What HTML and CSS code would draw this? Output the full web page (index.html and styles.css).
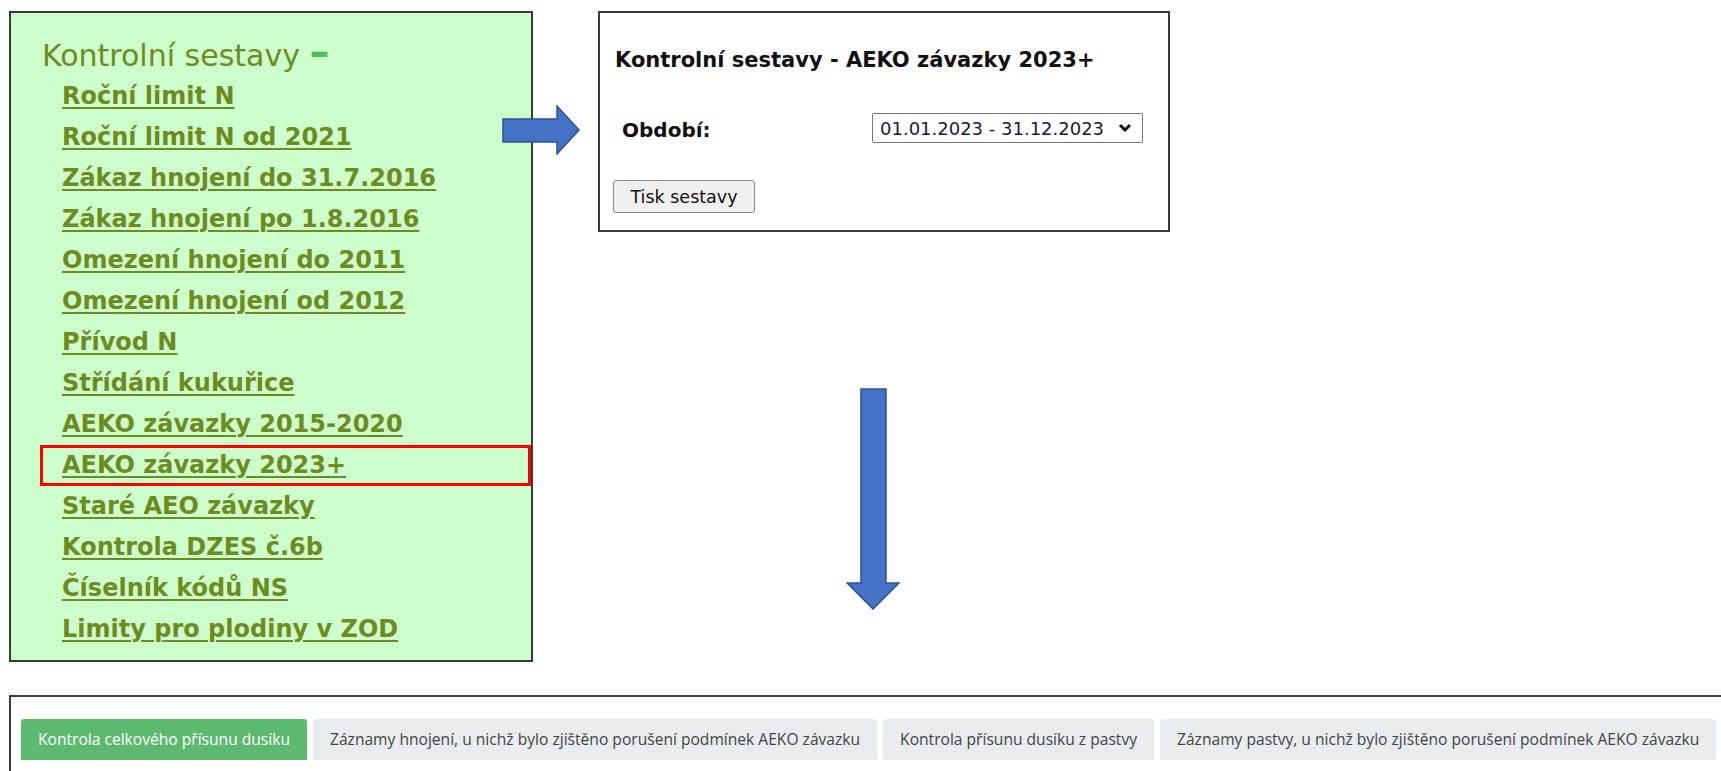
FILE: index.html
```html
<html>
<head>
  <meta charset="utf-8">
  <link rel="stylesheet" href="styles.css">
</head>
<body>
  <div id="sheet">
    <div id="top">
      <div id="menu">
        <div id="menu-title">Kontrolní sestavy <span id="menu-toggle">–</span></div>
        <ul id="menu-list">
          <li><a href="#">Roční limit N</a></li>
          <li><a href="#">Roční limit N od 2021</a></li>
          <li><a href="#">Zákaz hnojení do 31.7.2016</a></li>
          <li><a href="#">Zákaz hnojení po 1.8.2016</a></li>
          <li><a href="#">Omezení hnojení do 2011</a></li>
          <li><a href="#">Omezení hnojení od 2012</a></li>
          <li><a href="#">Přívod N</a></li>
          <li><a href="#">Střídání kukuřice</a></li>
          <li><a href="#">AEKO závazky 2015-2020</a></li>
          <li class="selected"><a href="#">AEKO závazky 2023+</a></li>
          <li><a href="#">Staré AEO závazky</a></li>
          <li><a href="#">Kontrola DZES č.6b</a></li>
          <li><a href="#">Číselník kódů NS</a></li>
          <li><a href="#">Limity pro plodiny v ZOD</a></li>
        </ul>
      </div>
      <div id="report">
        <div id="report-title">Kontrolní sestavy - AEKO závazky 2023+</div>
        <div class="field">
          <label>Období:</label>
          <div class="select-wrap">
            <select>
              <option>01.01.2023 - 31.12.2023</option>
            </select>
            <svg class="chevron" width="14" height="10" viewBox="0 0 14 10">
              <path d="M2 2 L7 7 L12 2" fill="none" stroke="#111" stroke-width="3"/>
            </svg>
          </div>
        </div>
        <button id="print-button">Tisk sestavy</button>
      </div>
    </div>
    <div id="result">
      <div id="tabs">
        <div class="tab active">Kontrola celkového přísunu dusíku</div>
        <div class="tab">Záznamy hnojení, u nichž bylo zjištěno porušení podmínek AEKO závazku</div>
        <div class="tab">Kontrola přísunu dusíku z pastvy</div>
        <div class="tab">Záznamy pastvy, u nichž bylo zjištěno porušení podmínek AEKO závazku</div>
      </div>
    </div>

    <svg class="arrow" id="arrow-right" width="78" height="50" viewBox="0 0 78 50">
      <path d="M1 14 H55 V1 L77 25 L55 49 V37 H1 Z" fill="#4472c4" stroke="#2f528f" stroke-width="1.5"/>
    </svg>
    <svg class="arrow" id="arrow-down" width="54" height="222" viewBox="0 0 54 222">
      <path d="M15 1 H40 V195 H53 L27 221 L1 195 H15 Z" fill="#4472c4" stroke="#2f528f" stroke-width="1.5"/>
    </svg>
  </div>
</body>
</html>
```

FILE: styles.css
```css
body {
  margin: 0;
  padding: 0;
  background-color: white;
  font-family: "DejaVu Sans", sans-serif;
  overflow: hidden;
}

#sheet {
  position: relative;
  width: 1721px;
  height: 771px;
  overflow: hidden;
}

#top {
  display: flex;
  align-items: flex-start;
  padding: 11px 0 0 9px;
}

#menu {
  box-sizing: border-box;
  width: 524px;
  height: 651px;
  background-color: #ccffcc;
  border: 2px solid #3a3a3a;
  padding: 22px 0 0 31px;
}

#menu-title {
  font-size: 30px;
  line-height: 41px;
  height: 41px;
  color: #6e8b1f;
  white-space: nowrap;
}

#menu-toggle {
  font-size: 40px;
  line-height: 30px;
  font-weight: bold;
  color: #5cb85c;
}

#menu-list {
  list-style-type: none;
  margin: 0 0 0 -2px;
  padding: 0;
}

#menu-list li {
  height: 35px;
  border: 3px solid transparent;
  padding-left: 19px;
  font-size: 24px;
  line-height: 35px;
  white-space: nowrap;
}

#menu-list li.selected {
  border-color: #ff0000;
}

#menu-list a {
  font-weight: bold;
  color: #6e8b1f;
  text-decoration: underline;
  text-decoration-thickness: 2px;
  text-underline-offset: 3px;
}

#report {
  box-sizing: border-box;
  width: 572px;
  height: 221px;
  margin-left: 65px;
  background-color: white;
  border: 2px solid #3a3a3a;
  padding: 35px 0 0 13px;
}

#report-title {
  margin-left: 2px;
  font-size: 21px;
  font-weight: bold;
  line-height: 24px;
  color: #111;
}

.field {
  display: flex;
  align-items: center;
  height: 30px;
  margin-top: 43px;
}

.field label {
  width: 250px;
  margin-left: 9px;
  font-size: 20px;
  font-weight: bold;
  color: #111;
}

.select-wrap {
  position: relative;
}

.select-wrap select {
  -webkit-appearance: none;
  appearance: none;
  box-sizing: border-box;
  width: 271px;
  height: 30px;
  margin: -4px 0 0 0;
  padding: 0 0 0 7px;
  border: 1px solid #767676;
  border-radius: 2px;
  background-color: white;
  font-family: "DejaVu Sans", sans-serif;
  font-size: 18px;
  color: #1a1a2e;
}

.chevron {
  position: absolute;
  right: 11px;
  top: 6px;
}

#print-button {
  box-sizing: border-box;
  width: 142px;
  height: 33px;
  margin-top: 35px;
  padding: 0;
  border: 1px solid #8a8a8a;
  border-radius: 3px;
  background-color: #efefef;
  font-family: "DejaVu Sans", sans-serif;
  font-size: 17.5px;
  color: #111;
}

#result {
  box-sizing: border-box;
  height: 76px;
  margin: 33px -20px 0 9px;
  border: 2px solid #3a3a3a;
  border-bottom: none;
  padding: 22px 0 0 10px;
}

#tabs {
  display: flex;
  gap: 6px;
}

.tab {
  height: 41px;
  line-height: 41px;
  padding: 0 17px;
  background-color: #e9ecef;
  border-radius: 3px 3px 0 0;
  font-family: "Open Sans", sans-serif;
  font-size: 15.6px;
  color: #444;
  white-space: nowrap;
}

.tab.active {
  background-color: #5cb96f;
  color: white;
}

.arrow {
  position: absolute;
}

#arrow-right {
  left: 502px;
  top: 105px;
}

#arrow-down {
  left: 846px;
  top: 388px;
}
```
